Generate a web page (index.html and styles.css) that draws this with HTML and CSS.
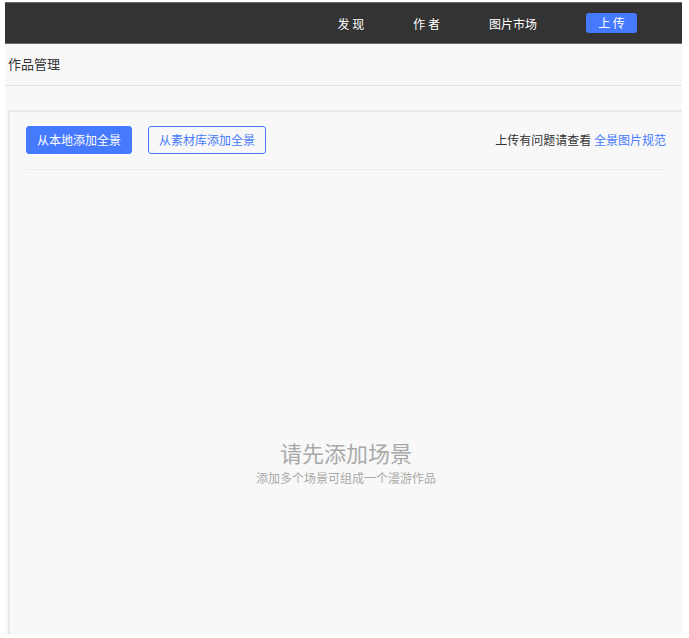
FILE: index.html
```html
<!DOCTYPE html>
<html lang="zh-CN">
<head>
<meta charset="UTF-8">
<meta name="viewport" content="width=device-width, initial-scale=1.0">
<title>作品管理</title>
<link rel="stylesheet" href="styles.css">
</head>
<body>

<div class="page">
    <header class="header">
        <nav class="nav">
            <a class="nav-link" href="#">发 现</a>
            <a class="nav-link" href="#">作 者</a>
            <a class="nav-link" href="#">图片市场</a>
        </nav>
        <button class="upload-button" type="button">上 传</button>
    </header>

    <h1 class="page-title">作品管理</h1>

    <main class="panel">
        <div class="toolbar">
            <button class="button button-primary" type="button">从本地添加全景</button>
            <button class="button" type="button">从素材库添加全景</button>
            <p class="help">上传有问题请查看 <a class="help-link" href="#">全景图片规范</a></p>
        </div>
        <div class="empty">
            <h2 class="empty-title">请先添加场景</h2>
            <p class="empty-text">添加多个场景可组成一个漫游作品</p>
        </div>
    </main>
</div>

</body>
</html>
```

FILE: styles.css
```css
* {
    box-sizing: border-box;
}
body {
    margin: 0;
    padding: 2px 7px 4px 5px;
    height: 100vh;
    background-color: #fff;
    font-family: "Noto Sans CJK SC", sans-serif;
    font-size: 12px;
    color: #333;
}
h1, h2, p {
    margin: 0;
    font-weight: normal;
}
a {
    text-decoration: none;
}
button {
    font-family: inherit;
    font-size: 12px;
    cursor: pointer;
}
.page {
    display: flex;
    flex-direction: column;
    height: 100%;
    background-color: #f8f8f8;
}

/* 顶部导航 */
.header {
    display: flex;
    justify-content: flex-end;
    align-items: center;
    gap: 49px;
    height: 42px;
    padding-right: 45px;
    background-color: #333;
    border-top: 1px solid #6b6b6b;
    border-bottom: 1px solid #6b6b6b;
}
.nav {
    display: flex;
    gap: 49px;
}
.nav-link {
    color: #fff;
}
.upload-button {
    width: 51px;
    height: 20px;
    padding: 0;
    line-height: 20px;
    color: #fff;
    background-color: #457aff;
    border: none;
    border-radius: 3px;
}
.page-title {
    height: 42px;
    padding-left: 3px;
    font-size: 13px;
    line-height: 40px;
    border-bottom: 1px solid #e3e3e3;
}

/* 作品面板 */
.panel {
    flex: 1;
    display: flex;
    flex-direction: column;
    margin: 24px 0 0 3px;
    padding: 14px 16px 0;
    border: 2px solid #e9e9e9;
    border-right: none;
    border-bottom: none;
}
.toolbar {
    display: flex;
    align-items: center;
    gap: 16px;
    padding-bottom: 15px;
    border-bottom: 1px solid #ececec;
}
.button {
    height: 28px;
    padding: 0 10px 2px;
    color: #457aff;
    background-color: transparent;
    border: 1px solid #457aff;
    border-radius: 3px;
}
.button-primary {
    color: #fff;
    background-color: #457aff;
}
.help {
    margin-left: auto;
    padding-bottom: 2px;
}
.help-link {
    color: #457aff;
}

/* 空状态提示 */
.empty {
    flex: 1;
    display: flex;
    flex-direction: column;
    justify-content: center;
    align-items: center;
    padding-top: 122px;
    color: #a9a9a9;
}
.empty-title {
    font-size: 22px;
    line-height: 30px;
}
.empty-text {
    line-height: 22px;
}
```
